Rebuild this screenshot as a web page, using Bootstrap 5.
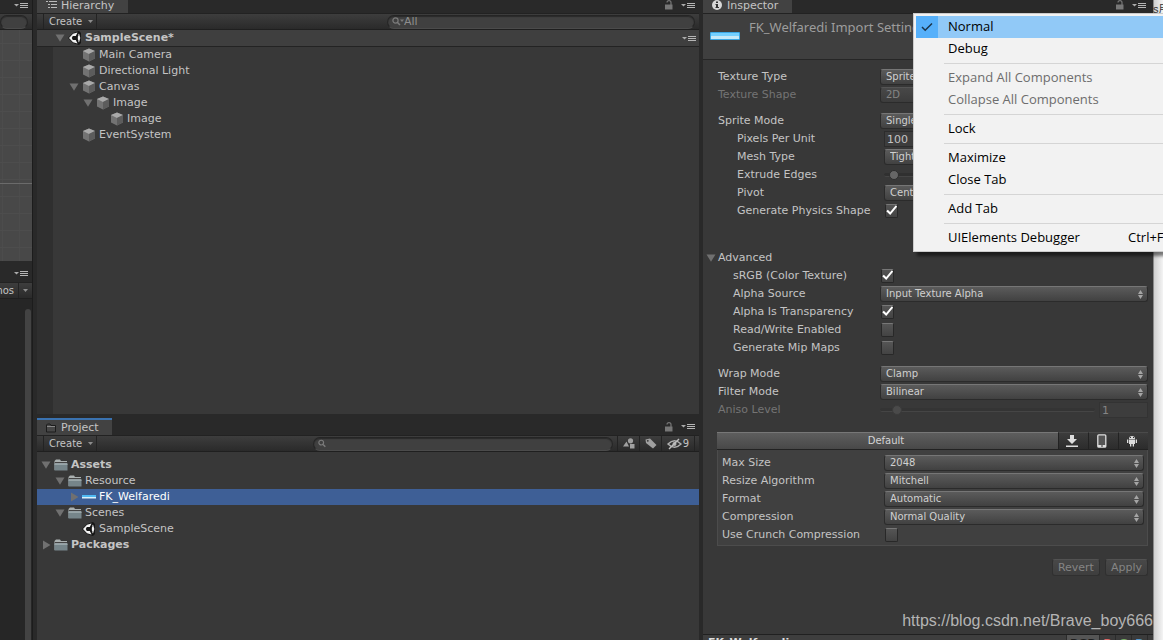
<!DOCTYPE html>
<html lang="en">
<head>
<meta charset="utf-8">
<meta name="viewport" content="width=device-width, initial-scale=1">
<title>Unity Editor</title>
<link href="https://cdn.jsdelivr.net/npm/bootstrap@5.3.0/dist/css/bootstrap.min.css" rel="stylesheet">
<style>
body{background:#292929;color:#c4c4c4;font:11px/16px "DejaVu Sans",sans-serif;height:100vh;overflow:hidden}
svg{display:block;flex:none}
button{color:inherit;font:inherit}
.scene-col{flex:0 0 33px;margin-right:4px;border-right:1px solid #1c1c1c;overflow:hidden}
.center-col{flex:662 1 0;min-width:0;margin-right:4px}
.inspector{flex:450 1 0;min-width:0;background:#383838}
.desk-strip{flex:0 0 10px;background:linear-gradient(90deg,#8a8a8a 0 1px,#cfcfcf 1px,#f4f4f4);color:#333;overflow:hidden}
.desk-strip span{font:11px/18px "Liberation Sans","Noto Sans CJK SC",sans-serif;white-space:nowrap}
.tabbar{background:#292929;height:13px}
.tabbar .tab{background:#424242;height:13px;padding:0 14px 0 8px;gap:4px}
.tab-title{color:#c4c4c4;line-height:11px}
.tabbar.tall{height:17px}
.tabbar.tall .tab{height:17px;border-top:2px solid #3a72b0;padding-right:13px}
.toolbar{height:17px;flex:none;background:linear-gradient(#3d3d3d,#2a2a2a);border-top:1px solid #222;border-bottom:1px solid #1f1f1f;font-size:10px}
.create{border:0;border-left:1px solid #232323;border-right:1px solid #232323;background:none;height:15px;line-height:15px;padding:0 3px 0 5px;gap:6px;margin-left:6px}
.search{background:#404040;border:1px solid #252525;border-bottom-color:#4b4b4b;border-radius:8px;height:14px;padding:0 4px;box-shadow:inset 0 1px 1px #2a2a2a}
.search input{background:none;border:0;outline:0;padding:0;color:#8e8e8e;font:11px/12px "DejaVu Sans",sans-serif;width:100%;min-width:0}
.search input::placeholder{color:#8e8e8e;opacity:1}
.tool-btn{border:0;border-left:1px solid #232323;background:none;height:15px;width:22px;padding:0}
.tool-btn.wide{width:34px;border-right:1px solid #232323;gap:1px}
.tree{background:#383838;overflow:hidden}
.hier{flex:367 1 0;box-shadow:inset 16px 0 #2f2f2f}
.proj{flex:188 1 0;padding-top:5px}
.tree ul{list-style:none;margin:0;padding:0}
.node{height:16px;line-height:16px;gap:3px;white-space:nowrap}
.d0{padding-left:4px}.d1{padding-left:18px}.d2{padding-left:32px}.d3{padding-left:46px}.d4{padding-left:60px}
.picked{background:#3e5f96;color:#fff}
.scene-row{background:#3f3f3f;border-bottom:1px solid #232323;height:17px;padding-left:18px;padding-right:3px;gap:3px;flex:none}
.arrow-slot{width:10px;flex:none}
.scene-view{flex:231 0 0;background-color:#484848;background-image:linear-gradient(#4d4d4d 1px,transparent 1px),linear-gradient(90deg,#4c4c4c 1px,transparent 1px);background-size:100% 17px,17px 100%;background-position:0 13px,2px 0}
.game-view{flex:341 0 0;background:#262626}
.scene-line{height:1px;background:#6b6b6b;margin-top:153px}
.thumb-bar{width:6px;border-radius:3px 3px 0 0;background:#434343;margin:10px 1px 0 auto}
.asset-head{background:#3f3f3f;border-top:1px solid #222;border-bottom:1px solid #262626;height:47px;padding:6px 7px}
.asset-title{font:13px/14px "Noto Sans",sans-serif;color:#9d9d9d;white-space:nowrap;padding-left:1px}
.prop{height:18px;padding-right:5px}
.prop label{flex:0 0 177px;padding-left:15px;white-space:nowrap;line-height:18px}
.prop.in label{flex-basis:181px;padding-left:34px}
.prop.adv label{padding-left:30px}
.off{color:#747474}
.pick{flex:1 1 0;min-width:0;height:16px;appearance:none;border:1px solid #2b2b2b;border-top-color:#767676;border-radius:3px;color:#d0d0d0;font:10px/12px "DejaVu Sans",sans-serif;padding:0 4px 1px 5px;outline:0;
background:url("data:image/svg+xml,%3Csvg xmlns='http://www.w3.org/2000/svg' width='5' height='9'%3E%3Cpath d='M0 4L2.500 0L5 4ZM0 5L2.500 9L5 5Z' fill='%23a5a5a5'/%3E%3C/svg%3E") no-repeat right 4px center,linear-gradient(#5b5b5b,#414141)}
.pick:disabled{color:#858585;opacity:1;background:linear-gradient(#484848,#3c3c3c);border-top-color:#555}
.field{height:16px;border:1px solid #2c2c2c;border-radius:0;background:#3d3d3d;color:#c4c4c4;font:11px/14px "DejaVu Sans",sans-serif;padding:0 2px;outline:0;min-width:0}
.field:disabled{color:#858585;border-color:#333}
.tick{appearance:none;width:13px;height:14px;margin:0 0 0 1px;border:1px solid #282828;border-top-color:#777;border-radius:2px;background:linear-gradient(#555,#434343)}
.tick:checked{background:url("data:image/svg+xml,%3Csvg xmlns='http://www.w3.org/2000/svg' width='12' height='11'%3E%3Cpath d='M1.500 5.500L4.500 8.500L10.500 1' fill='none' stroke='%23fff' stroke-width='2'/%3E%3C/svg%3E") no-repeat center top,linear-gradient(#555,#434343)}
.slide{appearance:none;background:none;flex:1 1 0;min-width:0;height:16px;margin:0}
.slide::-webkit-slider-runnable-track{height:4px;border-radius:2px;background:#303030;border-bottom:1px solid #454545}
.slide::-webkit-slider-thumb{appearance:none;width:10px;height:10px;margin-top:-3px;border-radius:50%;background:#666;border:1px solid #2d2d2d}
.slide:disabled::-webkit-slider-runnable-track{background:#343434}
.slide:disabled::-webkit-slider-thumb{background:#4a4a4a;border-color:#3b3b3b}
.platform{margin:13px 5px 0 14px;border:1px solid #4c4c4c;border-top:0;background:#404040;padding-bottom:1px}
.platform .prop{padding-right:3px}
.platform .prop label{flex-basis:166px;padding-left:4px}
.plat-tabs{height:18px;margin:0 -1px 4px}
.plat-tabs button{border:0;border-top:1px solid #4a4a4a;border-left:1px solid #222;border-bottom:1px solid #222;background:linear-gradient(#3c3c3c,#2c2c2c);width:30px;padding:0 3px 0 0}
.plat-tabs button.on{background:linear-gradient(#5e5e5e,#484848);border-top-color:#777;border-left:0;color:#d4d4d4;font-size:10px;line-height:16px;width:auto}
.act{border:1px solid #303030;border-top-color:#525252;border-radius:3px;background:linear-gradient(#484848,#3e3e3e);color:#858585!important;height:17px;line-height:14px;padding:0 5px}
.watermark{font:16px/20px "Liberation Sans",sans-serif;color:#b4b4b4;padding:35px 0 0}
.preview-bar{height:6px;background:#3e3e3e;border-top:1px solid #202020;padding-left:5px;overflow:hidden;font-weight:700;color:#ddd;line-height:15px}
.preview-bar button{border:0;border-left:1px solid #2b2b2b;background:#3b3b3b;width:16px;height:16px;line-height:15px;padding:0;font-weight:700}
.preview-bar .rgb{width:33px;background:#555;color:#1d1d1d}
.ctx{display:block;top:13px;right:-40px;width:290px;padding:2px;border:1px solid #ccc;border-radius:0;background:#f2f2f2;box-shadow:4px 4px 3px rgba(0,0,0,.5);font:13px/20px "Open Sans",sans-serif;min-width:0}
.ctx .dropdown-item{height:22px;line-height:20px;padding:0 60px 0 32px;color:#000;display:flex;justify-content:space-between;position:relative}
.ctx .dropdown-item.disabled{color:#6d6d6d}
.ctx .now{background:#91c9f7;padding-left:0;justify-content:flex-start;gap:10px}
.now i{width:22px;height:22px;background:#56b0fa;display:grid;place-items:center}
.ctx hr{margin:3px 0 3px 28px;border-top:1px solid #d5d5d5;opacity:1}
.ctx .keys{margin-right:-28px;width:40px;flex:none;white-space:nowrap}
</style>
</head>
<body class="d-flex position-relative">
<svg width="0" height="0" class="position-absolute">
<defs>
<symbol id="cube" viewBox="0 0 13 14"><path d="M6.500 .5L12.500 3V10.500L6.500 13.500L.5 10.500V3Z" fill="#737373"/><path d="M6.500 .5L12.500 3L6.500 6L.5 3Z" fill="#a9a9a9"/><path d="M6.500 6L12.500 3V10.500L6.500 13.500Z" fill="#5c5c5c"/></symbol>
<symbol id="down" viewBox="0 0 10 8"><path d="M.5 .5H9.500L5 7.800Z" fill="#707070"/></symbol>
<symbol id="side" viewBox="0 0 10 10"><path d="M2 .5V9.500L9.500 5Z" fill="#707070"/></symbol>
<symbol id="dir" viewBox="0 0 14 12"><path d="M.5 11V2L2 .5H6L7 2H13V11Z" fill="#aab0b0"/><path d="M1 3H13V4H1Z" fill="#444"/><path d="M.5 4.500H13.500V11.500H.5Z" fill="#76858a"/><path d="M.5 4.500H13.500V6H.5Z" fill="#98a5a8"/></symbol>
<symbol id="unity" viewBox="0 0 14 14"><path d="M0 7L5 2L11 0L13 2V12L11 14L5 12Z" fill="#161616"/><path d="M1 7L5 2.800L9.500 1.500L7.800 5H4.800L3.800 7L4.800 9H7.800L9.500 12.500L5 11.200ZM11 2.500L12.300 7L11 11.500L9.300 8.400L10 7L9.300 5.600Z" fill="#f3f3f3"/><path d="M5 6.300H8L9.500 3.700L10.600 4.300L9 7L10.600 9.700L9.500 10.300L8 7.700H5Z" fill="#161616"/></symbol>
<symbol id="opts" viewBox="0 0 14 7"><path d="M0 2H5L2.500 4.500Z" fill="#aaa"/><path d="M6 1.500H14M6 3.500H14M6 5.500H14" stroke="#b5b5b5"/></symbol>
<symbol id="lock" viewBox="0 0 8 10"><path d="M0 4.500H7.500V9.500H0Z" fill="#777"/><path d="M2 2.500Q2 .7 4 .7Q6 .7 6 2.500V5" fill="none" stroke="#777" stroke-width="1.200"/></symbol>
<symbol id="caret" viewBox="0 0 5 3"><path d="M0 0H5L2.500 3Z" fill="#8d8d8d"/></symbol>
<symbol id="lens" viewBox="0 0 12 9"><circle cx="3.500" cy="3.500" r="2.600" fill="none" stroke="#7b7b7b" stroke-width="1.200"/><path d="M5.500 5.500L8 8" stroke="#7b7b7b" stroke-width="1.500"/></symbol>
</defs></svg>

<aside class="scene-col d-flex flex-column">
  <div class="tabbar d-flex justify-content-end align-items-start flex-shrink-0 pe-1"><svg width="14" height="11"><use href="#opts"/></svg></div>
  <div class="toolbar d-flex align-items-center"><div class="search w-100 me-1" ></div></div>
  <div class="scene-view"><div class="scene-line"></div></div>
  <div class="tabbar tall d-flex justify-content-end align-items-center pe-1 flex-shrink-0 mt-1"><svg width="14" height="7"><use href="#opts"/></svg></div>
  <div class="toolbar d-flex align-items-center justify-content-end"><span>Gizmos</span><button class="tool-btn d-flex align-items-center justify-content-center ms-1 flex-shrink-0" style="width:14px" aria-label="Gizmo menu"><svg width="5" height="3"><use href="#caret"/></svg></button></div>
  <div class="game-view d-flex"><div class="thumb-bar"></div></div>
</aside>

<main class="center-col d-flex flex-column">
  <section class="d-flex flex-column" style="flex:414 1 0">
    <div class="tabbar d-flex justify-content-between flex-shrink-0">
      <div class="tab d-flex"><svg width="12" height="10" viewBox="0 0 12 10"><path d="M1 1.500H3M4 1.500H12M3 4.500H5M6 4.500H12M3 7.500H5M6 7.500H12" stroke="#bbb"/></svg><span class="tab-title">Hierarchy</span></div>
      <div class="d-flex pe-1 gap-2"><svg width="8" height="10"><use href="#lock"/></svg><svg width="14" height="11"><use href="#opts"/></svg></div>
    </div>
    <div class="toolbar d-flex align-items-center justify-content-between">
      <button class="create d-flex align-items-center">Create <svg width="5" height="3"><use href="#caret"/></svg></button>
      <div class="search d-flex align-items-center me-1" style="width:308px"><svg width="12" height="9" viewBox="0 0 12 9"><use href="#lens" width="12" height="9"/><path d="M8 2.500H12L10 5Z" fill="#7b7b7b"/></svg><input aria-label="Search hierarchy" placeholder="All"></div>
    </div>
    <div class="scene-row d-flex align-items-center"><svg width="10" height="8"><use href="#down"/></svg><svg width="14" height="14"><use href="#unity"/></svg><b>SampleScene*</b><svg class="ms-auto" width="14" height="7"><use href="#opts"/></svg></div>
    <div class="tree hier"><ul>
      <li class="node d-flex align-items-center d2"><span class="arrow-slot"></span><svg width="14" height="14"><use href="#cube"/></svg>Main Camera</li>
      <li class="node d-flex align-items-center d2"><span class="arrow-slot"></span><svg width="14" height="14"><use href="#cube"/></svg>Directional Light</li>
      <li class="node d-flex align-items-center d2"><svg width="10" height="8"><use href="#down"/></svg><svg width="14" height="14"><use href="#cube"/></svg>Canvas</li>
      <li class="node d-flex align-items-center d3"><svg width="10" height="8"><use href="#down"/></svg><svg width="14" height="14"><use href="#cube"/></svg>Image</li>
      <li class="node d-flex align-items-center d4"><span class="arrow-slot"></span><svg width="14" height="14"><use href="#cube"/></svg>Image</li>
      <li class="node d-flex align-items-center d2"><span class="arrow-slot"></span><svg width="14" height="14"><use href="#cube"/></svg>EventSystem</li>
    </ul></div>
  </section>
  <section class="d-flex flex-column pt-1" style="flex:222 1 0">
    <div class="tabbar tall d-flex justify-content-between align-items-center flex-shrink-0">
      <div class="tab d-flex align-items-center"><svg width="12" height="10" viewBox="0 0 12 10"><path d="M1.500 9V2L2.500 1H5L6 2.500H10.500V9Z" fill="#474747" stroke="#1c1c1c"/><path d="M2 3.500H10" stroke="#888"/></svg><span class="tab-title">Project</span></div>
      <div class="d-flex pe-1 gap-2 align-items-center"><svg width="8" height="10"><use href="#lock"/></svg><svg width="14" height="7"><use href="#opts"/></svg></div>
    </div>
    <div class="toolbar d-flex align-items-center">
      <button class="create d-flex align-items-center">Create <svg width="5" height="3"><use href="#caret"/></svg></button>
      <div class="search d-flex align-items-center ms-auto me-1" style="width:300px"><svg width="11" height="9"><use href="#lens"/></svg><input aria-label="Search project"></div>
      <button class="tool-btn d-flex align-items-center justify-content-center" aria-label="Search by type"><svg width="12" height="11" viewBox="0 0 12 11"><circle cx="7.500" cy="2.800" r="2.600" fill="#a0a0a0"/><path d="M0 8.500L3.500 3.500L6 8.500ZM7 6H11.500V10.500H7Z" fill="#a0a0a0"/></svg></button>
      <button class="tool-btn d-flex align-items-center justify-content-center" aria-label="Search by label"><svg width="12" height="11" viewBox="0 0 12 11"><path d="M.5 1.500L5 .5L11.500 7L8 10.500L1 5Z" fill="#a0a0a0"/><circle cx="2.800" cy="2.800" r=".9" fill="#333"/></svg></button>
      <button class="tool-btn wide d-flex align-items-center justify-content-center me-1" aria-label="Hidden packages"><svg width="15" height="12" viewBox="0 0 15 12"><path d="M1 6Q7.500 -.5 14 6Q7.500 12.500 1 6Z" fill="none" stroke="#b0b0b0" stroke-width="1.500"/><circle cx="7.500" cy="6" r="2" fill="#b0b0b0"/><path d="M2 11L12 1" stroke="#bebebe" stroke-width="1.500"/></svg>9</button>
    </div>
    <div class="tree proj"><ul>
      <li class="node d-flex align-items-center d0"><svg width="10" height="8"><use href="#down"/></svg><svg width="14" height="12"><use href="#dir"/></svg><b>Assets</b></li>
      <li class="node d-flex align-items-center d1"><svg width="10" height="8"><use href="#down"/></svg><svg width="14" height="12"><use href="#dir"/></svg>Resource</li>
      <li class="node d-flex align-items-center d2 picked"><svg width="10" height="10"><use href="#side"/></svg><svg width="14" height="4" viewBox="0 0 14 4"><path d="M0 0H14V2H0Z" fill="#4fb9f2"/><path d="M0 2H14V3.500H0Z" fill="#d9f1fb"/></svg>FK_Welfaredi</li>
      <li class="node d-flex align-items-center d1"><svg width="10" height="8"><use href="#down"/></svg><svg width="14" height="12"><use href="#dir"/></svg>Scenes</li>
      <li class="node d-flex align-items-center d2"><span class="arrow-slot"></span><svg width="14" height="14"><use href="#unity"/></svg>SampleScene</li>
      <li class="node d-flex align-items-center d0"><svg width="10" height="10"><use href="#side"/></svg><svg width="14" height="12"><use href="#dir"/></svg><b>Packages</b></li>
    </ul></div>
  </section>
</main>

<section class="inspector d-flex flex-column">
  <div class="tabbar d-flex justify-content-between flex-shrink-0">
    <div class="tab d-flex"><svg width="12" height="12" viewBox="0 0 12 12"><circle cx="6" cy="5" r="5" fill="#d8d8d8"/><path d="M5 1.500H7V3H5ZM4.500 4H7V7H8V8H4.500V7H5V5H4.500Z" fill="#333"/></svg><span class="tab-title">Inspector</span></div>
    <div class="d-flex gap-2" style="padding-right:7px"><svg width="8" height="10"><use href="#lock"/></svg><svg width="14" height="11"><use href="#opts"/></svg></div>
  </div>
  <header class="asset-head d-flex gap-2 flex-shrink-0">
    <svg width="30" height="32" viewBox="0 0 30 32"><rect y="12" width="30" height="8" rx="1" fill="#3ba7e4"/><path d="M1 13H29V16H1Z" fill="#74d0ff"/><path d="M1 16H29V19H1Z" fill="#c5e9f8"/></svg>
    <span class="asset-title">FK_Welfaredi Import Settings</span>
  </header>
  <form class="d-flex flex-column flex-grow-1 pt-2">
    <div class="prop d-flex align-items-center"><label for="ttype">Texture Type</label><select id="ttype" class="pick"><option>Sprite (2D and UI)</option></select></div>
    <div class="prop d-flex align-items-center off mb-2"><label for="tshape">Texture Shape</label><select id="tshape" class="pick" disabled><option>2D</option></select></div>
    <div class="prop d-flex align-items-center"><label for="smode">Sprite Mode</label><select id="smode" class="pick"><option>Single</option></select></div>
    <div class="prop in d-flex align-items-center"><label for="ppu">Pixels Per Unit</label><input id="ppu" class="field flex-grow-1" value="100"></div>
    <div class="prop in d-flex align-items-center"><label for="mesh">Mesh Type</label><select id="mesh" class="pick"><option>Tight</option></select></div>
    <div class="prop in d-flex align-items-center"><label for="extrude">Extrude Edges</label><input id="extrude" class="slide" type="range" min="0" max="48" value="1"></div>
    <div class="prop in d-flex align-items-center"><label for="pivot">Pivot</label><select id="pivot" class="pick"><option>Center</option></select></div>
    <div class="prop in d-flex align-items-center"><label for="phys">Generate Physics Shape</label><input id="phys" class="tick" type="checkbox" checked></div>
    <div class="d-flex align-items-center" style="padding:30px 0 1px 3px;gap:2px"><svg width="10" height="8"><use href="#down"/></svg>Advanced</div>
    <div class="prop adv d-flex align-items-center"><label for="srgb">sRGB (Color Texture)</label><input id="srgb" class="tick" type="checkbox" checked></div>
    <div class="prop adv d-flex align-items-center"><label for="asrc">Alpha Source</label><select id="asrc" class="pick"><option>Input Texture Alpha</option></select></div>
    <div class="prop adv d-flex align-items-center"><label for="atr">Alpha Is Transparency</label><input id="atr" class="tick" type="checkbox" checked></div>
    <div class="prop adv d-flex align-items-center"><label for="rw">Read/Write Enabled</label><input id="rw" class="tick" type="checkbox"></div>
    <div class="prop adv d-flex align-items-center mb-2"><label for="mip">Generate Mip Maps</label><input id="mip" class="tick" type="checkbox"></div>
    <div class="prop d-flex align-items-center"><label for="wrap">Wrap Mode</label><select id="wrap" class="pick"><option>Clamp</option></select></div>
    <div class="prop d-flex align-items-center"><label for="filt">Filter Mode</label><select id="filt" class="pick"><option>Bilinear</option></select></div>
    <div class="prop d-flex align-items-center off"><label for="aniso">Aniso Level</label><input id="aniso" class="slide" type="range" min="0" max="17" value="1" disabled><input class="field ms-1" style="width:49px" value="1" aria-label="Aniso value" disabled></div>
    <div class="platform">
      <div class="plat-tabs d-flex"><button type="button" class="on flex-grow-1">Default</button>
        <button type="button" aria-label="Standalone"><svg class="mx-auto" width="12" height="12" viewBox="0 0 12 12"><path d="M4 0H8V4H11L6 9L1 4H4ZM0 10.500H12V12H0Z" fill="#ddd"/></svg></button>
        <button type="button" aria-label="iOS"><svg class="mx-auto" width="10" height="14" viewBox="0 0 10 14"><rect x=".8" y=".8" width="8" height="12.400" rx="1" fill="#555" stroke="#ddd" stroke-width="1.300"/><path d="M1 11H9V13H1Z" fill="#ddd"/><path d="M4 11.500H6V12.500H4Z" fill="#333"/></svg></button>
        <button type="button" aria-label="Android"><svg class="mx-auto" width="10" height="12" viewBox="0 0 10 12"><path d="M2 4Q2 1 5 1Q8 1 8 4ZM2 4.500H8V9H2ZM0 4.500H1.300V8H0ZM8.700 4.500H10V8H8.700ZM3 9H4.300V11.500H3ZM5.700 9H7V11.500H5.700Z" fill="#ddd"/><path d="M3 2H4V3H3ZM6 2H7V3H6Z" fill="#333"/></svg></button></div>
      <div class="prop d-flex align-items-center"><label for="msize">Max Size</label><select id="msize" class="pick"><option>2048</option></select></div>
      <div class="prop d-flex align-items-center"><label for="rsz">Resize Algorithm</label><select id="rsz" class="pick"><option>Mitchell</option></select></div>
      <div class="prop d-flex align-items-center"><label for="fmt">Format</label><select id="fmt" class="pick"><option>Automatic</option></select></div>
      <div class="prop d-flex align-items-center"><label for="cmp">Compression</label><select id="cmp" class="pick"><option>Normal Quality</option></select></div>
      <div class="prop d-flex align-items-center"><label for="crunch">Use Crunch Compression</label><input id="crunch" class="tick" type="checkbox"></div>
    </div>
    <div class="d-flex justify-content-end" style="gap:5px;padding:13px 5px 0 0"><button type="button" class="act" disabled>Revert</button><button type="button" class="act" disabled>Apply</button></div>
    <div class="watermark text-end">https://blog.csdn.net/Brave_boy666</div>
  </form>
  <div class="preview-bar d-flex flex-shrink-0"><span class="me-auto">FK_Welfaredi</span><button class="rgb">RGB</button><button style="color:#d66">R</button><button style="color:#7a6">G</button><button style="color:#59c">B</button><button style="width:6px" aria-label="More"></button></div>
</section>
<aside class="desk-strip"><span>s用</span></aside>

<ul class="dropdown-menu ctx position-absolute">
  <li><button class="dropdown-item now"><i><svg width="12" height="10" viewBox="0 0 12 10"><path d="M1 5L4.200 8.200L11 1.500" fill="none" stroke="#1c3448" stroke-width="1.500"/></svg></i>Normal</button></li>
  <li><button class="dropdown-item">Debug</button></li>
  <li><hr></li>
  <li><button class="dropdown-item disabled" disabled>Expand All Components</button></li>
  <li><button class="dropdown-item disabled" disabled>Collapse All Components</button></li>
  <li><hr></li>
  <li><button class="dropdown-item">Lock</button></li>
  <li><hr></li>
  <li><button class="dropdown-item">Maximize</button></li>
  <li><button class="dropdown-item">Close Tab</button></li>
  <li><hr></li>
  <li><button class="dropdown-item">Add Tab</button></li>
  <li><hr></li>
  <li><button class="dropdown-item">UIElements Debugger<span class="keys">Ctrl+F5</span></button></li>
</ul>
<script src="https://cdn.jsdelivr.net/npm/bootstrap@5.3.0/dist/js/bootstrap.bundle.min.js"></script>
</body>
</html>
